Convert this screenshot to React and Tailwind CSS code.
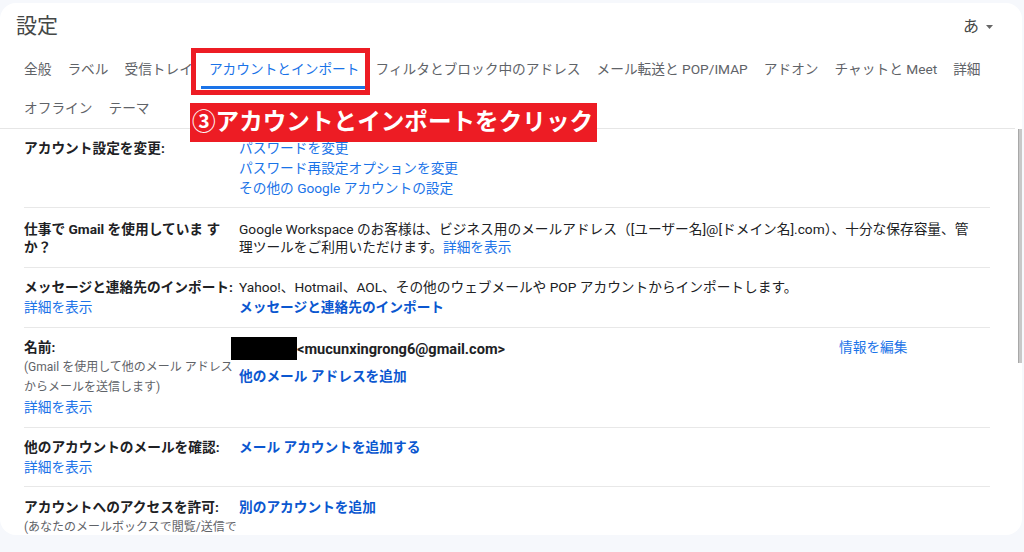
import React from 'react';

const font = { fontFamily: 'Roboto, "Noto Sans CJK JP", sans-serif' };

const tabsTop = [
  '全般',
  'ラベル',
  '受信トレイ',
  'アカウントとインポート',
  'フィルタとブロック中のアドレス',
  'メール転送と POP/IMAP',
  'アドオン',
  'チャットと Meet',
  '詳細',
];

const Tab = ({ label, active }) => (
  <div
    className={`relative flex h-[39px] items-center px-2 text-[13.7px] whitespace-nowrap ${
      active ? 'text-[#1a73e8]' : 'text-[#5f6368]'
    }`}
  >
    {label}
    {active && <span className="absolute bottom-0 left-0 right-0 h-[3px] bg-[#1a73e8]" />}
  </div>
);

const Link = ({ children, bold }) => (
  <div className={bold ? 'font-bold text-[#0b57d0]' : 'text-[#1a73e8]'}>{children}</div>
);

const Row = ({ left, children, className = '', last }) => (
  <div className={`flex ${last ? '' : 'border-b border-[#e8e8e8]'} ${className}`}>
    <div className="w-[215px] shrink-0">{left}</div>
    <div className="flex-1">{children}</div>
  </div>
);

const Label = ({ children }) => <div className="font-bold text-[#202124]">{children}</div>;
const Note = ({ children }) => (
  <div className="text-[12px] leading-[20px] text-[#5f6368]">{children}</div>
);

export default function App() {
  return (
    <div className="h-[552px] overflow-hidden bg-[#f6f8fc] pt-[3px]" style={font}>
      <div className="relative mr-[2px] flex h-[532px] flex-col overflow-hidden rounded-2xl bg-white">
        {/* header */}
        <div className="mr-[7px] border-b border-[#e6e6e6]">
          <div className="flex h-[47px] items-center justify-between pl-4 pr-[22px]">
            <div className="text-[21px] text-[#444746]">設定</div>
            <div className="flex items-center gap-[7px] text-[16px] text-[#444746]">
              あ
              <svg width="7" height="4" viewBox="0 0 7 4">
                <path d="M0 0h7L3.5 4z" fill="#666" />
              </svg>
            </div>
          </div>
          <div className="flex pl-4">
            {tabsTop.map((t, i) => (
              <Tab key={t} label={t} active={i === 3} />
            ))}
          </div>
          <div className="flex pl-4">
            <Tab label="オフライン" />
            <Tab label="テーマ" />
          </div>
        </div>

        {/* body */}
        <div className="flex flex-1 overflow-hidden">
          <div className="flex-1 overflow-hidden pl-6 pr-[23px] text-[13.7px] leading-5 text-[#202124]">
            <Row className="pt-[9px] pb-[9px]" left={<Label>アカウント設定を変更:</Label>}>
              <Link>パスワードを変更</Link>
              <Link>パスワード再設定オプションを変更</Link>
              <Link>その他の Google アカウントの設定</Link>
            </Row>

            <Row
              className="pt-3 pb-[11px] leading-[18px]"
              left={
                <Label>
                  仕事で Gmail を使用していま す<br />
                  か？
                </Label>
              }
            >
              <div className="whitespace-nowrap">
                Google Workspace のお客様は、ビジネス用のメールアドレス（[ユーザー名]@[ドメイン名].com）、十分な保存容量、管
              </div>
              <div>
                理ツールをご利用いただけます。<span className="text-[#1a73e8]">詳細を表示</span>
              </div>
            </Row>

            <Row
              className="pt-[9px] pb-[10px]"
              left={
                <>
                  <Label>
                    <span className="whitespace-nowrap">メッセージと連絡先のインポート:</span>
                  </Label>
                  <Link>詳細を表示</Link>
                </>
              }
            >
              <div>Yahoo!、Hotmail、AOL、その他のウェブメールや POP アカウントからインポートします。</div>
              <Link bold>メッセージと連絡先のインポート</Link>
            </Row>

            <Row
              className="pt-[9px] pb-[10px]"
              left={
                <>
                  <Label>名前:</Label>
                  <Note>(Gmail を使用して他のメール アドレス</Note>
                  <Note>からメールを送信します)</Note>
                  <Link>詳細を表示</Link>
                </>
              }
            >
              <div className="flex">
                <div className="w-[600px]">
                  <div className="flex items-center">
                    <span className="-ml-2 h-[23px] w-[66px] bg-black" />
                    <span className="text-[14.6px] font-bold">&lt;mucunxingrong6@gmail.com&gt;</span>
                  </div>
                  <div className="mt-[6px]">
                    <Link bold>他のメール アドレスを追加</Link>
                  </div>
                </div>
                <Link>情報を編集</Link>
              </div>
            </Row>

            <Row
              className="pt-[9px] pb-[9px]"
              left={
                <>
                  <Label>他のアカウントのメールを確認:</Label>
                  <Link>詳細を表示</Link>
                </>
              }
            >
              <Link bold>メール アカウントを追加する</Link>
            </Row>

            <Row
              last
              className="pt-[10px]"
              left={
                <>
                  <Label>アカウントへのアクセスを許可:</Label>
                  <Note>(あなたのメールボックスで閲覧/送信で</Note>
                </>
              }
            >
              <Link bold>別のアカウントを追加</Link>
            </Row>
          </div>
          <div className="flex w-[9px] justify-end">
            <div className="h-[234px] w-[4px] border-l border-[#a8a8a8] bg-[#c8c8c8]" />
          </div>
        </div>

        {/* annotations */}
        <div className="absolute left-[191px] top-[45px] h-[47px] w-[179px] border-[5px] border-[#ed1c24]" />
        <div className="absolute left-[190px] top-[100px] flex h-[39px] w-[407px] items-center pl-[2px] text-[23.6px] font-bold text-white bg-[#ed1c24] whitespace-nowrap">
          ③アカウントとインポートをクリック
        </div>
      </div>
    </div>
  );
}
